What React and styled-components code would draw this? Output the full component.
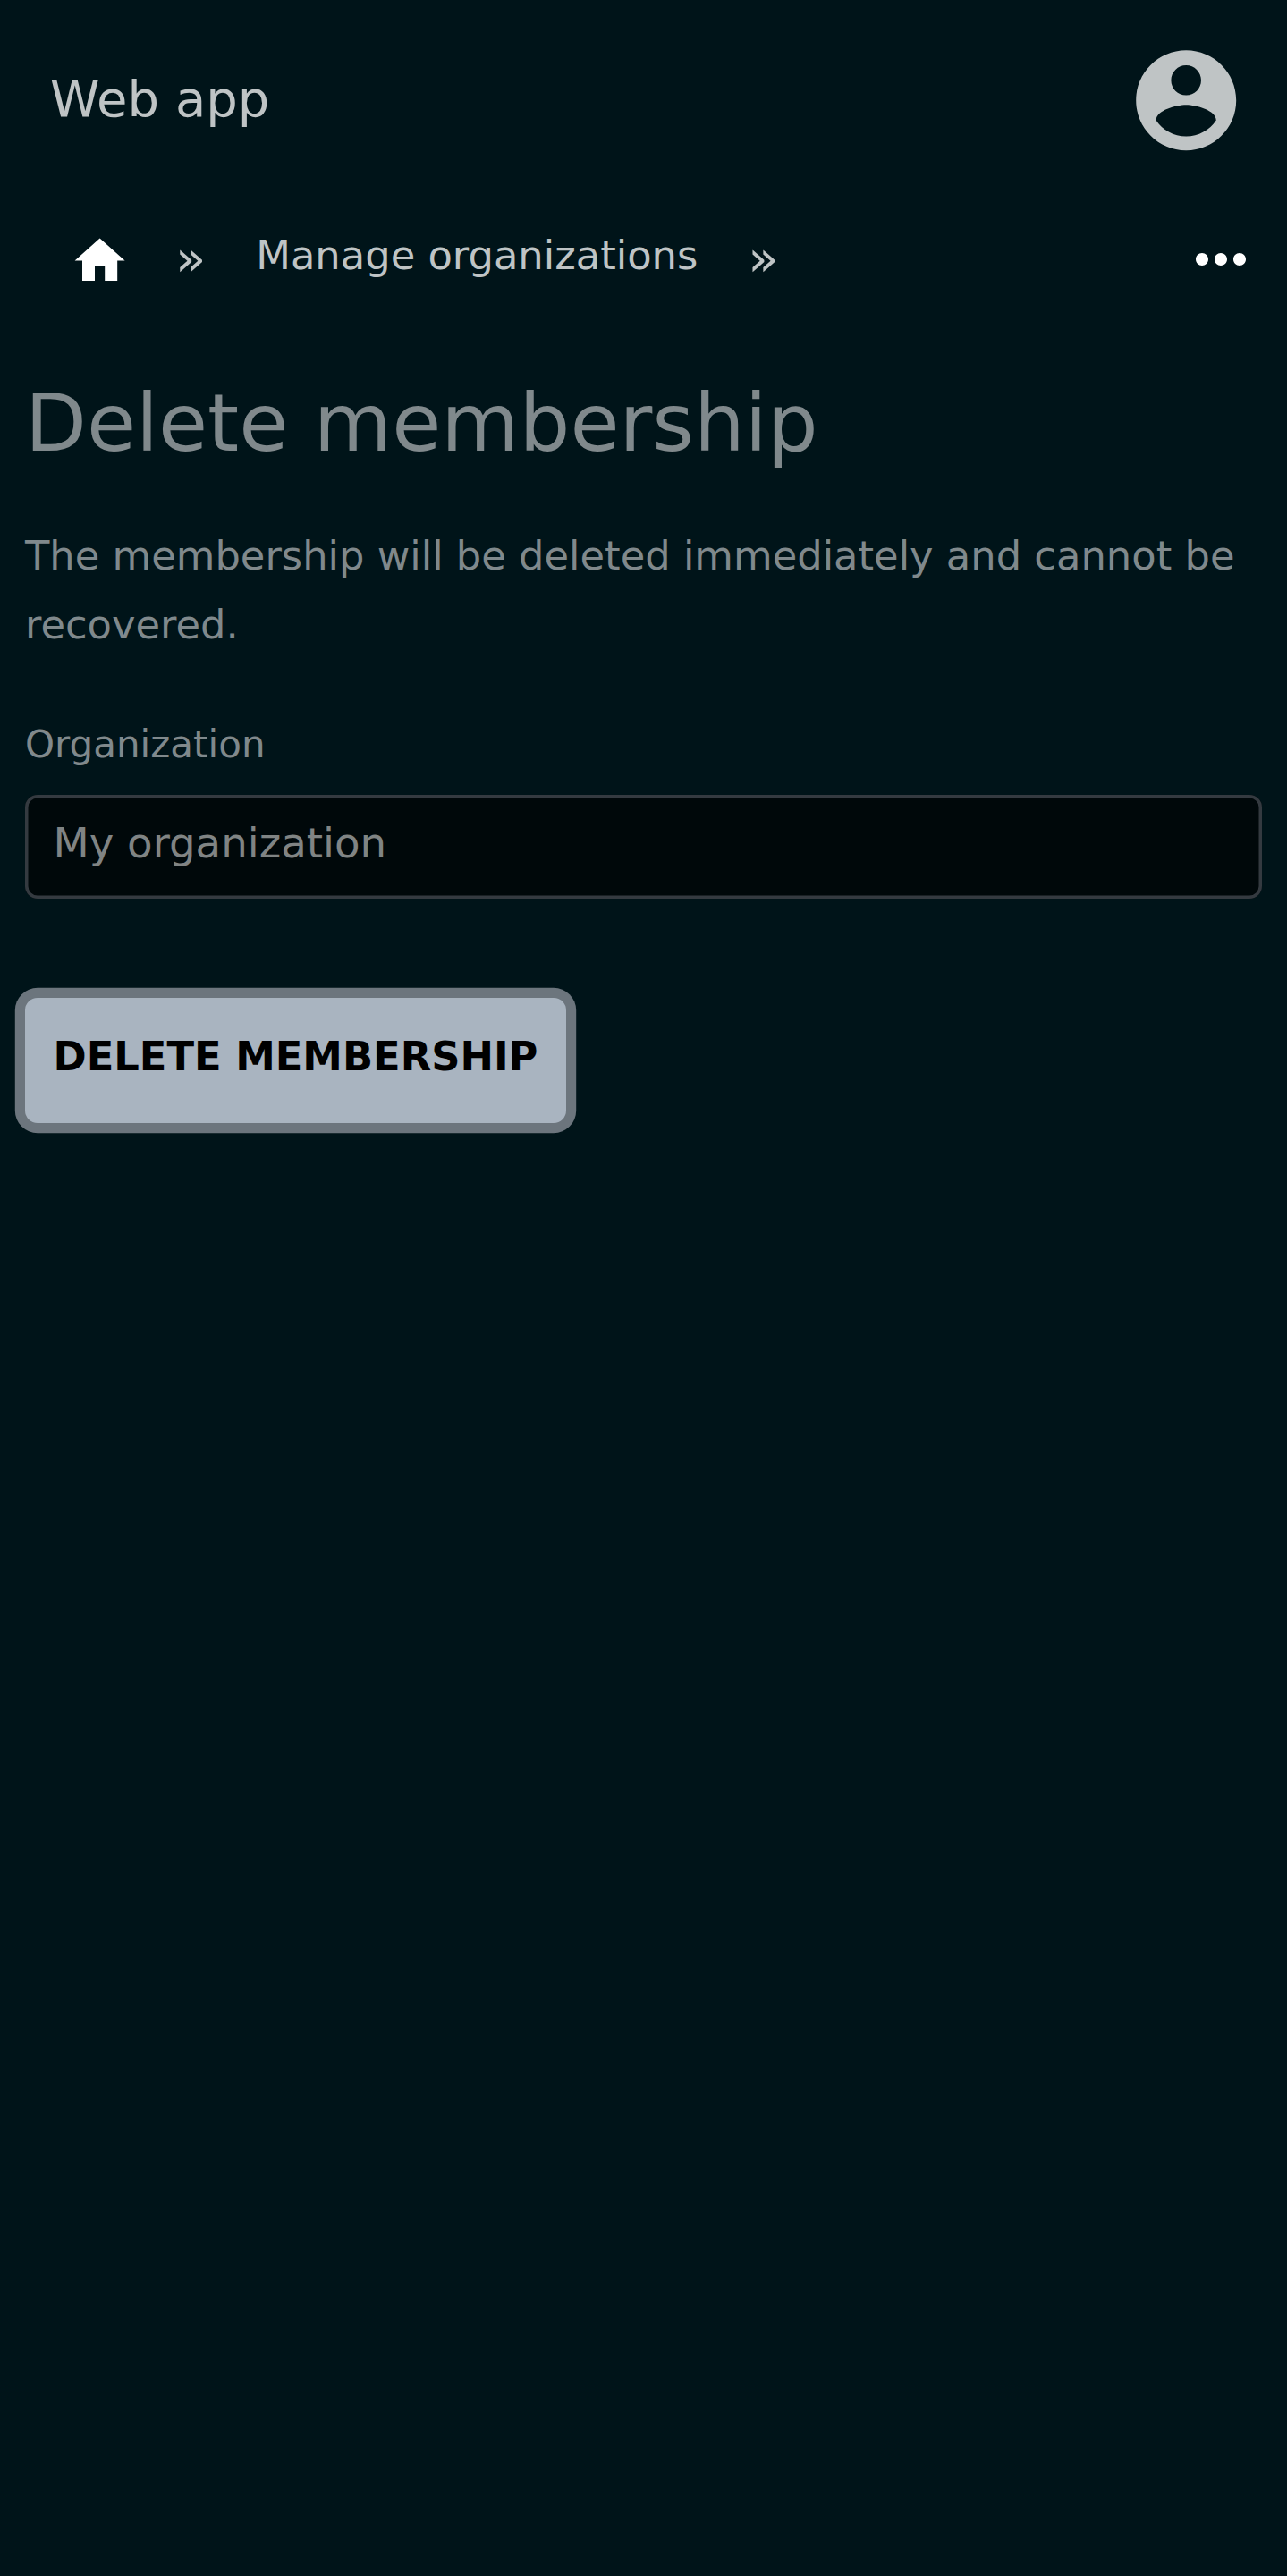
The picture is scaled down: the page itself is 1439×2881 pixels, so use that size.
import React from "react";
import styled, { createGlobalStyle } from "styled-components";

const GlobalStyle = createGlobalStyle`
  body {
    margin: 0;
    background: #001419;
    color: #80898c;
    font-family: "DejaVu Sans", sans-serif;
  }
`;

const Page = styled.div`
  display: flex;
  flex-direction: column;
  min-height: 2881px;
`;

const TopBar = styled.header`
  display: flex;
  align-items: center;
  justify-content: space-between;
  box-sizing: border-box;
  height: 224px;
  padding: 0 45.4px 0 56px;
  color: #bfc4c5;
`;

const Brand = styled.a`
  font-size: 56px;
  line-height: 66px;
  padding-bottom: 3px;
`;

const Icon = styled.svg`
  display: block;
  flex: none;
  width: ${(p) => p.$size}px;
  height: ${(p) => p.$size}px;
  fill: currentColor;
`;

const Breadcrumbs = styled.nav`
  display: flex;
  align-items: center;
  box-sizing: border-box;
  height: 134px;
  padding: 0 32px 0 78.4px;
  color: #bfc4c5;
`;

const IconLink = styled.a`
  display: flex;
  color: #fff;
  padding: ${(p) => (p.$end ? "0 0 2px" : "2px 0 0")};
  margin-left: ${(p) => (p.$end ? "auto" : "0")};
`;

const Separator = styled.span`
  width: 34.3px;
  margin: 0 56px 0 ${(p) => p.$before}px;
  font-size: 56px;
  line-height: 66px;
  padding-bottom: 5px;
`;

const Crumb = styled.a`
  font-size: 44.8px;
  line-height: 76px;
  padding-bottom: 10px;
  white-space: nowrap;
`;

const Main = styled.main`
  display: flex;
  flex-direction: column;
  align-items: flex-start;
  padding: 50px 28px 0;
`;

const Title = styled.h1`
  margin: 0;
  font-size: 89.6px;
  font-weight: 400;
  line-height: 130px;
`;

const Notice = styled.p`
  margin: 45px 0 0;
  font-size: 44.8px;
  line-height: 77px;
`;

const Field = styled.div`
  display: flex;
  flex-direction: column;
  align-self: stretch;
  margin-top: 61px;
`;

const Label = styled.label`
  font-size: 42px;
  line-height: 70px;
`;

const Input = styled.input`
  box-sizing: border-box;
  width: 100%;
  height: 116px;
  margin: 21px 0 0;
  padding: 0 31.4px 8px;
  border: 0;
  border-radius: 14px;
  box-shadow: inset 0 0 0 3.5px #343a40;
  background: #00080a;
  color: #808484;
  font-family: inherit;
  font-size: 46.67px;
  outline: none;
`;

const DeleteButton = styled.button`
  box-sizing: border-box;
  height: 140px;
  margin: 111px 0 0;
  padding: 0 32px 10px 31.5px;
  border: 0;
  border-radius: 14px;
  box-shadow: 0 0 0 11.2px #6c757d;
  background: #a9b4c0;
  color: #000;
  font-family: inherit;
  font-size: 44.8px;
  font-weight: 700;
  text-transform: uppercase;
`;

export default function App() {
  return (
    <>
      <GlobalStyle />
      <Page>
        <TopBar>
          <Brand>Web app</Brand>
          <Icon $size={134.4} viewBox="0 0 24 24">
            <path d="M12 2C6.48 2 2 6.48 2 12s4.48 10 10 10 10-4.48 10-10S17.52 2 12 2zm0 3c1.66 0 3 1.34 3 3s-1.34 3-3 3-3-1.34-3-3 1.34-3 3-3zm0 14.2c-2.5 0-4.71-1.28-6-3.22.03-1.99 4-3.08 6-3.08 1.99 0 5.97 1.09 6 3.08-1.29 1.94-3.5 3.22-6 3.22z" />
          </Icon>
        </TopBar>
        <Breadcrumbs>
          <IconLink>
            <Icon $size={67.2} viewBox="0 0 24 24">
              <path d="M10 20v-6h4v6h5v-8h3L12 3 2 12h3v8z" />
            </Icon>
          </IconLink>
          <Separator $before={50.4}>»</Separator>
          <Crumb>Manage organizations</Crumb>
          <Separator $before={56}>»</Separator>
          <IconLink $end>
            <Icon $size={84} viewBox="0 0 24 24">
              <path d="M6 10c-1.1 0-2 .9-2 2s.9 2 2 2 2-.9 2-2-.9-2-2-2zm12 0c-1.1 0-2 .9-2 2s.9 2 2 2 2-.9 2-2-.9-2-2-2zm-6 0c-1.1 0-2 .9-2 2s.9 2 2 2 2-.9 2-2-.9-2-2-2z" />
            </Icon>
          </IconLink>
        </Breadcrumbs>
        <Main>
          <Title>Delete membership</Title>
          <Notice>The membership will be deleted immediately and cannot be recovered.</Notice>
          <Field>
            <Label htmlFor="organization">Organization</Label>
            <Input id="organization" defaultValue="My organization" readOnly />
          </Field>
          <DeleteButton type="button">Delete membership</DeleteButton>
        </Main>
      </Page>
    </>
  );
}
